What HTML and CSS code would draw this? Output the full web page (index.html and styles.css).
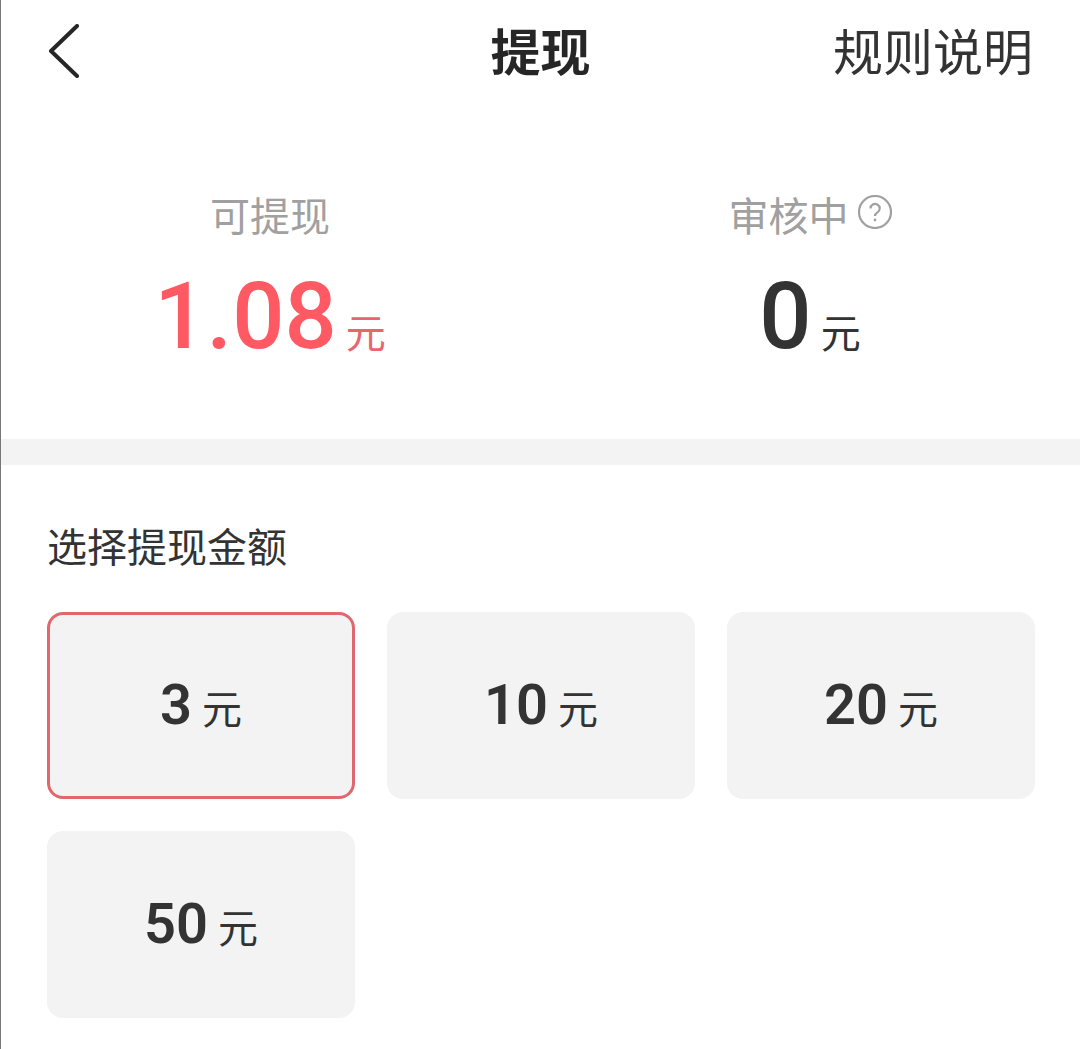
FILE: index.html
```html
<!DOCTYPE html>
<html lang="zh-CN">
<head>
  <meta charset="UTF-8" />
  <title>提现</title>
  <link rel="stylesheet" href="styles.css">
</head>
<body>
  <main class="page">
    <header class="nav">
      <svg class="back" viewBox="0 0 32 54" aria-hidden="true"><path d="M29 2 L3 27 L29 52" /></svg>
      <h1>提现</h1>
      <a class="rules">规则说明</a>
    </header>

    <section class="balance">
      <div class="stat">
        <p class="stat-label">可提现</p>
        <p class="stat-value red"><b>1.08</b><span>元</span></p>
      </div>
      <div class="stat">
        <p class="stat-label">审核中<svg class="help" viewBox="0 0 34 34" aria-hidden="true"><circle cx="17" cy="17" r="16" /><path d="M12.5 13.5a4.6 4.6 0 1 1 7 3.9c-1.6 1-2.5 1.8-2.5 3.6" /><circle class="pt" cx="17" cy="25" r="1.4" /></svg></p>
        <p class="stat-value"><b>0</b><span>元</span></p>
      </div>
    </section>

    <div class="divider"></div>

    <section class="amounts">
      <h2>选择提现金额</h2>
      <div class="options">
        <button class="option active"><b>3</b><span>元</span></button>
        <button class="option"><b>10</b><span>元</span></button>
        <button class="option"><b>20</b><span>元</span></button>
        <button class="option"><b>50</b><span>元</span></button>
      </div>
    </section>
  </main>
</body>
</html>
```

FILE: styles.css
```css
* { box-sizing: border-box; }
html, body { height: 100%; }
body {
  margin: 0;
  background: #fff;
  color: #333;
  font-family: Roboto, "Noto Sans CJK SC", sans-serif;
}

.page {
  height: 1049px;
  border-left: 1px solid #777;
  overflow: hidden;
}

/* Top bar */
.nav {
  position: relative;
  height: 98px;
  display: flex;
  align-items: center;
  justify-content: space-between;
  padding: 0 47px 0 47px;
}
.back { width: 32px; height: 54px; margin-top: 4px; fill: none; stroke: #262626; stroke-width: 4; stroke-linecap: round; stroke-linejoin: round; }
.nav h1 {
  position: absolute;
  left: 0; right: 0;
  margin: 0;
  text-align: center;
  font-size: 50px;
  font-weight: 700;
  color: #262626;
}
.rules { font-size: 50px; color: #333; }

/* Balance */
.balance {
  height: 341px;
  display: grid;
  grid-template-columns: 540px 540px;
  margin-left: -1px;
  padding-top: 93px;
}
.stat { text-align: center; }
.stat-label {
  margin: 0;
  height: 54px;
  line-height: 54px;
  font-size: 40px;
  color: #a0a0a0;
  display: flex;
  justify-content: center;
  align-items: center;
  gap: 8px;
}
.help { width: 34px; height: 34px; margin: -12px 0 0 1px; fill: none; stroke: #a0a0a0; stroke-width: 2.2; }
.help .pt { fill: #a0a0a0; stroke: none; }
.stat-value {
  margin: 27px 0 0;
  display: flex;
  justify-content: center;
  align-items: baseline;
  gap: 9px;
  line-height: 90px;
  color: #333;
}
.stat-value b { font-size: 92px; font-weight: 500; }
.stat-value span { font-size: 40px; }
.stat-value.red { color: #ff5964; }
.stat-value.red span { color: #e8656e; }

.divider { height: 26px; background: #f3f3f3; }

/* Amount options */
.amounts { padding: 0 45px 0 46px; }
.amounts h2 {
  margin: 0;
  padding-top: 57px;
  font-size: 40px;
  line-height: 54px;
  font-weight: 400;
  color: #333;
}
.options {
  margin-top: 36px;
  display: grid;
  grid-template-columns: repeat(3, 308px);
  grid-auto-rows: 187px;
  gap: 32px;
}
.option {
  border: 0;
  border-radius: 16px;
  background: #f3f3f3;
  color: #333;
  font-family: inherit;
  display: flex;
  justify-content: center;
  align-items: baseline;
  gap: 10px;
  line-height: 187px;
  padding: 0;
}
.option b { font-size: 56px; font-weight: 600; }
.option span { font-size: 40px; }
.option.active { border: 3px solid #e2666d; line-height: 181px; }
```
